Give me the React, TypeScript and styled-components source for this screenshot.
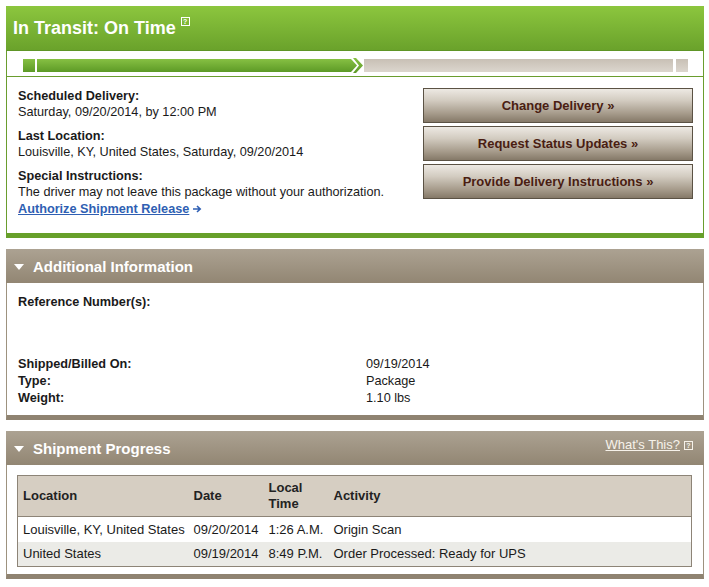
import React from "react";
import styled, { createGlobalStyle } from "styled-components";

const GlobalStyle = createGlobalStyle`
  html, body { margin: 0; padding: 0; background: #ffffff; }
  body {
    font-family: Arial, "Liberation Sans", Helvetica, sans-serif;
    font-size: 12.7px;
    color: #1a1a1a;
  }
`;

const Page = styled.div`
  width: 698px;
  padding: 6px;
  display: flex;
  flex-direction: column;
  gap: 11px;
`;

/* ---------- status panel ---------- */
const StatusPanel = styled.section`
  border: 1px solid #6a9d2e;
  border-top: none;
  border-bottom: 5px solid #67a02a;
  background: #fff;
`;

const StatusHeader = styled.div`
  height: 44px;
  margin: 0 -1px;
  padding-left: 7px;
  display: flex;
  align-items: center;
  background: linear-gradient(#8cc63e, #6aa22b);
  border-bottom: 1px solid #5e9526;
`;

const StatusTitle = styled.h1`
  margin: 0;
  font-size: 18px;
  font-weight: bold;
  color: #fff;
  display: flex;
  align-items: flex-start;
  gap: 5px;
  line-height: 22px;
`;

const HelpIcon = styled.span<{ $color: string; $offset: number }>`
  display: inline-flex;
  align-items: center;
  justify-content: center;
  width: 7px;
  height: 7px;
  border: 1px solid ${(p) => p.$color};
  color: ${(p) => p.$color};
  font-size: 7px;
  line-height: 7px;
  font-weight: bold;
  margin-top: ${(p) => p.$offset}px;
`;

const ProgressArea = styled.div`
  height: 26px;
  padding: 6px 15px 0 16px;
  box-sizing: border-box;
  border-bottom: 1px solid #6a9d2e;
  display: flex;
  align-items: flex-start;
`;

const ProgressTrack = styled.div`
  flex: 1;
  height: 17px;
  display: flex;
  align-items: center;
`;

const Seg = styled.div<{ $done: boolean; $w?: number }>`
  height: 13px;
  ${(p) => (p.$w ? `width: ${p.$w}px; flex: none;` : "flex: 1;")}
  background: ${(p) =>
    p.$done
      ? "linear-gradient(#86c043, #5d9a26)"
      : "linear-gradient(#c8c0b5, #dcd6ce)"};
`;

const Gap = styled.div<{ $w: number }>`
  width: ${(p) => p.$w}px;
  flex: none;
`;

const Chevrons = styled.svg`
  flex: none;
  display: block;
`;

const StatusBody = styled.div`
  display: flex;
  justify-content: space-between;
  padding: 11px 10px 16px 11px;
`;

const Details = styled.div`
  display: flex;
  flex-direction: column;
  gap: 8px;
  line-height: 16px;
`;

const Field = styled.div``;

const Label = styled.div`
  font-weight: bold;
`;

const Value = styled.div``;

const ReleaseLink = styled.a`
  color: #2f5fb3;
  font-weight: bold;
  display: inline-flex;
  align-items: center;
  gap: 4px;
  margin-top: 1px;
  cursor: pointer;
  & > span { text-decoration: underline; }
`;

const Actions = styled.div`
  width: 270px;
  display: flex;
  flex-direction: column;
  gap: 3px;
`;

const ActionButton = styled.button`
  height: 35px;
  border: 1px solid #5b5244;
  background: linear-gradient(#ede9e3 0%, #d2cbc0 35%, #a59a8a 75%, #857968 100%);
  color: #4a1d12;
  font-family: Arial, "Liberation Sans", Helvetica, sans-serif;
  font-size: 13px;
  font-weight: bold;
  cursor: pointer;
  padding: 0;
`;

/* ---------- brown panels ---------- */
const Panel = styled.section`
  border: 1px solid #9d927f;
  border-top: none;
  border-bottom: 5px solid #8f8371;
  background: #fff;
`;

const PanelHeader = styled.div`
  height: 34px;
  margin: 0 -1px;
  padding: 0 11px 0 8px;
  display: flex;
  align-items: center;
  justify-content: space-between;
  background: linear-gradient(#aca292, #928673);
`;

const PanelTitle = styled.h2`
  margin: 0;
  display: flex;
  align-items: center;
  gap: 9px;
  font-size: 15px;
  font-weight: bold;
  color: #fff;
`;

const Triangle = styled.span`
  width: 0;
  height: 0;
  border-left: 5px solid transparent;
  border-right: 5px solid transparent;
  border-top: 6px solid #fff;
  margin-top: 1px;
`;

const WhatsThis = styled.a`
  display: flex;
  align-items: center;
  gap: 4px;
  color: #f6f2ea;
  font-size: 13px;
  margin-top: -8px;
  cursor: pointer;
  & > span:first-child { text-decoration: underline; }
`;

const InfoBody = styled.div`
  padding: 11px 11px 8px 11px;
  line-height: 17px;
`;

const RefBlock = styled.div`
  font-weight: bold;
  height: 62px;
`;

const InfoGrid = styled.div`
  display: grid;
  grid-template-columns: 348px 1fr;
`;

const InfoLabel = styled.div`
  font-weight: bold;
`;

const InfoValue = styled.div``;

const ProgressBody = styled.div`
  padding: 10px 11px 7px 10px;
`;

const Table = styled.table`
  width: 100%;
  table-layout: fixed;
  border-collapse: collapse;
  border: 1px solid #8d8477;
  font-size: 13px;
`;

const Th = styled.th<{ $w?: number }>`
  background: #d6cec2;
  text-align: left;
  font-weight: bold;
  height: 41px;
  padding: 0 5px;
  line-height: 16px;
  color: #222;
  border-bottom: 1px solid #8d8477;
  ${(p) => (p.$w ? `width: ${p.$w}px;` : "")}
  box-sizing: border-box;
`;

const Tr = styled.tr<{ $alt: boolean }>`
  background: ${(p) => (p.$alt ? "#ebebe7" : "#ffffff")};
`;

const Td = styled.td`
  height: 25px;
  padding: 0 5px;
  white-space: nowrap;
  box-sizing: border-box;
`;

const rows = [
  ["Louisville, KY, United States", "09/20/2014", "1:26 A.M.", "Origin Scan"],
  ["United States", "09/19/2014", "8:49 P.M.", "Order Processed: Ready for UPS"],
];

export default function App() {
  return (
    <>
      <GlobalStyle />
      <Page>
        <StatusPanel>
          <StatusHeader>
            <StatusTitle>
              In Transit: On Time <HelpIcon $color="#fff" $offset={0}>?</HelpIcon>
            </StatusTitle>
          </StatusHeader>
          <ProgressArea>
            <ProgressTrack>
              <Seg $done $w={12} />
              <Gap $w={2} />
              <Seg $done $w={311} />
              <Chevrons width="16" height="17" viewBox="0 0 16 17">
                <defs>
                  <linearGradient id="chev" x1="0" y1="0" x2="0" y2="1">
                    <stop offset="0" stopColor="#86c043" />
                    <stop offset="1" stopColor="#5d9a26" />
                  </linearGradient>
                </defs>
                <path d="M0 2 L3 2 L9 8.5 L3 15 L0 15 Z" fill="url(#chev)" />
                <path d="M5 1 L8 1 L15 8.5 L8 16 L5 16 L11 8.5 Z" fill="url(#chev)" />
              </Chevrons>
              <Seg $done={false} />
              <Gap $w={3} />
              <Seg $done={false} $w={12} />
            </ProgressTrack>
          </ProgressArea>
          <StatusBody>
            <Details>
              <Field>
                <Label>Scheduled Delivery:</Label>
                <Value>Saturday, 09/20/2014, by 12:00 PM</Value>
              </Field>
              <Field>
                <Label>Last Location:</Label>
                <Value>Louisville, KY, United States, Saturday, 09/20/2014</Value>
              </Field>
              <Field>
                <Label>Special Instructions:</Label>
                <Value>The driver may not leave this package without your authorization.</Value>
                <ReleaseLink>
                  <span>Authorize Shipment Release</span>
                  <svg width="9" height="8" viewBox="0 0 9 8">
                    <path d="M0 4 H7 M4 1 L7.2 4 L4 7" stroke="#2f5fb3" strokeWidth="1.6" fill="none" />
                  </svg>
                </ReleaseLink>
              </Field>
            </Details>
            <Actions>
              <ActionButton>Change Delivery »</ActionButton>
              <ActionButton>Request Status Updates »</ActionButton>
              <ActionButton>Provide Delivery Instructions »</ActionButton>
            </Actions>
          </StatusBody>
        </StatusPanel>

        <Panel>
          <PanelHeader>
            <PanelTitle>
              <Triangle />
              Additional Information
            </PanelTitle>
          </PanelHeader>
          <InfoBody>
            <RefBlock>Reference Number(s):</RefBlock>
            <InfoGrid>
              <InfoLabel>Shipped/Billed On:</InfoLabel>
              <InfoValue>09/19/2014</InfoValue>
              <InfoLabel>Type:</InfoLabel>
              <InfoValue>Package</InfoValue>
              <InfoLabel>Weight:</InfoLabel>
              <InfoValue>1.10 lbs</InfoValue>
            </InfoGrid>
          </InfoBody>
        </Panel>

        <Panel>
          <PanelHeader>
            <PanelTitle>
              <Triangle />
              Shipment Progress
            </PanelTitle>
            <WhatsThis>
              <span>What's This?</span>
              <HelpIcon $color="#f6f2ea" $offset={3}>?</HelpIcon>
            </WhatsThis>
          </PanelHeader>
          <ProgressBody>
            <Table>
              <thead>
                <tr>
                  <Th $w={171}>Location</Th>
                  <Th $w={75}>Date</Th>
                  <Th $w={65}>
                    Local
                    <br />
                    Time
                  </Th>
                  <Th>Activity</Th>
                </tr>
              </thead>
              <tbody>
                {rows.map((r, i) => (
                  <Tr key={i} $alt={i % 2 === 1}>
                    {r.map((c, j) => (
                      <Td key={j}>{c}</Td>
                    ))}
                  </Tr>
                ))}
              </tbody>
            </Table>
          </ProgressBody>
        </Panel>
      </Page>
    </>
  );
}
